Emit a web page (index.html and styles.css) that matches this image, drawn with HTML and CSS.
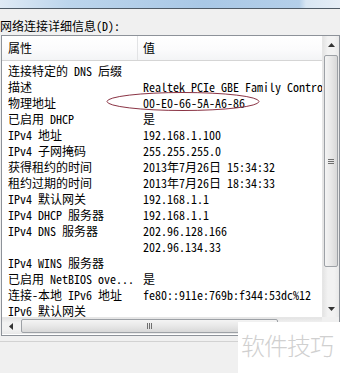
FILE: index.html
```html
<!DOCTYPE html>
<html>
<head>
<meta charset="utf-8">
<link rel="stylesheet" href="styles.css">
</head>
<body>
<div class="titlebar"></div>
<div class="label">网络连接详细信息(D):</div>
<div class="listbox">
  <div class="content">
    <div class="header">
      <div class="hcell c1">属性</div>
      <div class="hcell c2">值</div>
    </div>
    <div class="rows">
      <div class="row"><span class="c1">连接特定的 DNS 后缀</span><span class="c2"></span></div>
      <div class="row"><span class="c1">描述</span><span class="c2">Realtek PCIe GBE Family Controller</span></div>
      <div class="row"><span class="c1">物理地址</span><span class="c2">00-E0-66-5A-A6-86</span></div>
      <div class="row"><span class="c1">已启用 DHCP</span><span class="c2">是</span></div>
      <div class="row"><span class="c1">IPv4 地址</span><span class="c2">192.168.1.100</span></div>
      <div class="row"><span class="c1">IPv4 子网掩码</span><span class="c2">255.255.255.0</span></div>
      <div class="row"><span class="c1">获得租约的时间</span><span class="c2">2013年7月26日 15:34:32</span></div>
      <div class="row"><span class="c1">租约过期的时间</span><span class="c2">2013年7月26日 18:34:33</span></div>
      <div class="row"><span class="c1">IPv4 默认网关</span><span class="c2">192.168.1.1</span></div>
      <div class="row"><span class="c1">IPv4 DHCP 服务器</span><span class="c2">192.168.1.1</span></div>
      <div class="row"><span class="c1">IPv4 DNS 服务器</span><span class="c2">202.96.128.166</span></div>
      <div class="row"><span class="c1"></span><span class="c2">202.96.134.33</span></div>
      <div class="row"><span class="c1">IPv4 WINS 服务器</span><span class="c2"></span></div>
      <div class="row"><span class="c1">已启用 NetBIOS ove...</span><span class="c2">是</span></div>
      <div class="row"><span class="c1">连接-本地 IPv6 地址</span><span class="c2">fe80::911e:769b:f344:53dc%12</span></div>
      <div class="row"><span class="c1">IPv6 默认网关</span><span class="c2"></span></div>
    </div>
  </div>
  <div class="vscroll">
    <div class="sbtn"><svg width="7" height="4" viewBox="0 0 7 4"><path d="M0 4 L3.5 0 L7 4 Z" fill="#333"/></svg></div>
    <div class="vthumb"><div class="vgrip"><i></i><i></i><i></i></div></div>
    <div class="vtrack"></div>
    <div class="sbtn"><svg width="7" height="4" viewBox="0 0 7 4"><path d="M0 0 L3.5 4 L7 0 Z" fill="#333"/></svg></div>
  </div>
  <div class="hscroll">
    <div class="hbtn"><svg width="4" height="7" viewBox="0 0 4 7"><path d="M4 0 L0 3.5 L4 7 Z" fill="#333"/></svg></div>
    <div class="hthumb"><div class="hgrip"><i></i><i></i><i></i></div></div>
    <div class="htrack"></div>
    <div class="hbtn"><svg width="4" height="7" viewBox="0 0 4 7"><path d="M0 0 L4 3.5 L0 7 Z" fill="#333"/></svg></div>
  </div>
  <div class="corner"></div>
</div>
<div class="footer"></div>
<svg class="mark" width="156" height="22" viewBox="0 0 156 22"><ellipse cx="77" cy="10.5" rx="76" ry="9" fill="none" stroke="#8a3344" stroke-width="1"/></svg>
<div class="watermark">软件技巧</div>
</body>
</html>
```
FILE: styles.css
```css
html, body {
  margin: 0;
  padding: 0;
}
body {
  width: 340px;
  height: 373px;
  overflow: hidden;
  background: #f0f0f0;
  position: relative;
  font-family: "Noto Sans Mono CJK SC", "Noto Sans CJK SC", monospace;
  font-size: 12px;
  color: #000;
}
.titlebar {
  height: 8px;
  background: linear-gradient(90deg, #dfeaf5 0%, #bcd5ec 20%, #a9c8e6 60%, #b4cfe9 88%, #d8e6f3 90%, #e6eef7 100%);
  border-bottom: 1px solid #4e5a66;
}
.label {
  padding-top: 9px;
  height: 17px;
  line-height: 16px;
  white-space: nowrap;
}
.listbox {
  margin-left: 1px;
  height: 299px;
  border: 1px solid #8d9299;
  background: #fff;
  display: grid;
  grid-template-columns: 320px 17px;
  grid-template-rows: 281px 17px;
}
.content {
  overflow: hidden;
  white-space: nowrap;
}
.header {
  display: flex;
  height: 24px;
  border-bottom: 1px solid #d5d5d5;
  background: linear-gradient(#ffffff, #fbfbfc 55%, #f3f4f6);
}
.hcell {
  line-height: 24px;
}
.header .c1 {
  width: 129px;
  padding-left: 6px;
  border-right: 1px solid #e2e3e5;
}
.header .c2 {
  padding-left: 5px;
}
.rows {
  padding-top: 2px;
}
.row {
  display: flex;
  height: 16px;
  line-height: 16px;
}
.row .c1 {
  width: 129px;
  padding-left: 6px;
  flex: none;
  overflow: hidden;
}
.row .c2 {
  padding-left: 6px;
  flex: none;
}
.vscroll {
  display: flex;
  flex-direction: column;
  background: linear-gradient(90deg, #e4e4e4, #f2f2f2 30%, #f2f2f2 70%, #e8e8e8);
  border-left: 1px solid #e6e6e6;
}
.sbtn {
  height: 17px;
  display: flex;
  align-items: center;
  justify-content: center;
  flex: none;
}
.vthumb {
  margin: 2px 1px 0 1px;
  height: 210px;
  flex: none;
  border: 1px solid #9da1a6;
  border-radius: 2px;
  background: linear-gradient(90deg, #f4f4f4, #e8e8e8 50%, #d8d8d8);
  display: flex;
  align-items: center;
  justify-content: center;
}
.vgrip {
  display: flex;
  flex-direction: column;
  gap: 1px;
}
.vgrip i {
  display: block;
  width: 6px;
  height: 1px;
  background: #6e6e6e;
}
.vtrack {
  flex: 1;
}
.hscroll {
  display: flex;
  background: linear-gradient(#e4e4e4, #f2f2f2 30%, #f2f2f2 70%, #e8e8e8);
  border-top: 1px solid #e6e6e6;
}
.hbtn {
  width: 17px;
  display: flex;
  align-items: center;
  justify-content: center;
  flex: none;
}
.hthumb {
  margin: 1px 0 1px 2px;
  width: 255px;
  flex: none;
  border: 1px solid #9da1a6;
  border-radius: 2px;
  background: linear-gradient(#f4f4f4, #e8e8e8 50%, #d8d8d8);
  display: flex;
  align-items: center;
  justify-content: center;
}
.hgrip {
  display: flex;
  gap: 1px;
}
.hgrip i {
  display: block;
  width: 1px;
  height: 6px;
  background: #6e6e6e;
}
.htrack {
  flex: 1;
}
.corner {
  background: #f0f0f0;
}
.footer {
  margin-top: 5px;
  border-top: 1px solid #d2d2d2;
}
.mark {
  position: absolute;
  left: 106px;
  top: 91px;
}
.watermark {
  position: absolute;
  left: 238px;
  top: 322px;
  right: 0;
  bottom: 0;
  background: #fff;
  color: #d0d0d0;
  font-family: "Noto Sans CJK SC", sans-serif;
  font-weight: 300;
  font-size: 24px;
  line-height: 24px;
  padding: 11px 0 0 3px;
  white-space: nowrap;
  letter-spacing: -1px;
}
```
